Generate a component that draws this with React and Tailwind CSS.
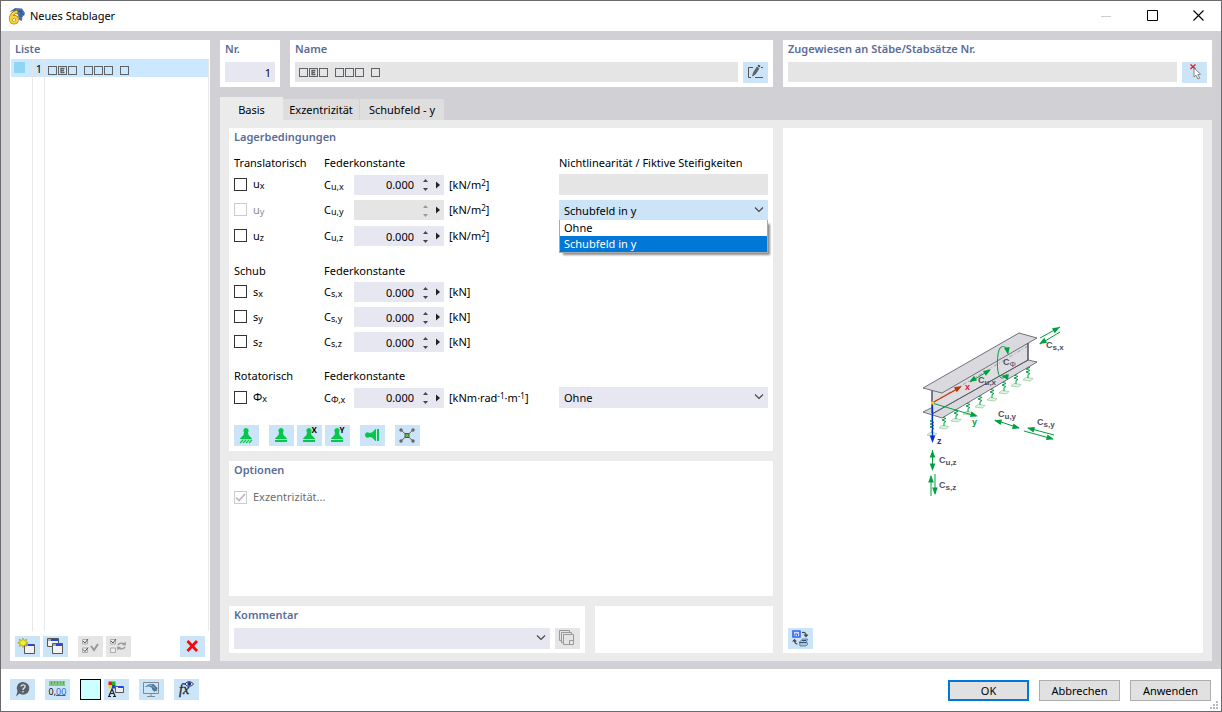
import React from 'react';

const panelTitle = 'font-semibold text-[11px] leading-[18px] text-[#5b6c96]';

function IconButton({ label, disabled, children, className = '' }) {
  return (
    <button
      type="button"
      aria-label={label}
      disabled={disabled}
      className={`h-[21px] w-[25px] shrink-0 ${disabled ? 'bg-[#e5e5e5]' : 'bg-[#cce4f7]'} ${className}`}
    >
      <svg viewBox="0 0 25 21" className="block h-[21px] w-[25px]" aria-hidden="true">
        {children}
      </svg>
    </button>
  );
}

function NameGlyphs() {
  return (
    <svg viewBox="0 0 82 10" className="block h-[10px] w-[82px]" fill="none" stroke="#5f6368" aria-hidden="true">
      {[0, 10, 20, 36, 46, 56, 72].map((x) => (
        <rect key={x} x={x + 0.5} y="0.5" width="8" height="8" />
      ))}
      <path d="M16.500 2.500H13v4h3.500M13 4.500h3" strokeWidth="1.300" />
    </svg>
  );
}

function AppIcon() {
  return (
    <svg viewBox="0 0 18 18" className="h-[18px] w-[18px]" aria-hidden="true">
      <path d="M1.500 5 7 1l7 .5 3 4.500-1 3-1.500-1-.5 6-3-1-1-5-4-4z" fill="#4d74aa" />
      <path d="m6 3 8 2M5 5l9-1M12 6l4 2M11 9h4" stroke="#2f4f80" />
      <path d="M9.500 4.500C5 5.500 2.800 8.500 2.800 12c0 2.500 1.200 3.700 3.200 3.700S9 14.300 9 12.500 7.900 9.800 6.200 9.800 3.400 11 3.400 12.200" fill="none" stroke="#a57a10" strokeWidth="3.400" />
      <path d="M9.500 4.500C5 5.500 2.800 8.500 2.800 12c0 2.500 1.200 3.700 3.200 3.700S9 14.300 9 12.500 7.900 9.800 6.200 9.800 3.400 11 3.400 12.200" fill="none" stroke="#f8d530" strokeWidth="2.200" />
    </svg>
  );
}

function TitleBar() {
  return (
    <header className="flex h-[30px] items-center justify-between bg-white">
      <div className="flex items-center gap-1 pl-[7px]">
        <AppIcon />
        <h1 className="text-[11px] text-black">Neues Stablager</h1>
      </div>
      <div className="flex">
        <button type="button" aria-label="Minimieren" disabled className="flex h-[30px] w-[46px] items-center justify-center">
          <svg viewBox="0 0 10 11" className="h-[11px] w-[10px]"><path d="M0 5.500h10" stroke="#ccc" /></svg>
        </button>
        <button type="button" aria-label="Maximieren" className="flex h-[29px] w-[46px] items-center justify-center">
          <svg viewBox="0 0 11 11" className="h-[11px] w-[11px]"><path d="M.5.5h10v10H.5z" fill="none" stroke="#000" /></svg>
        </button>
        <button type="button" aria-label="Schließen" className="flex h-[29px] w-[46px] items-center justify-center">
          <svg viewBox="0 0 11 11" className="h-[11px] w-[11px]"><path d="m.5.5 10 10m0-10-10 10" stroke="#000" strokeWidth="1.100" /></svg>
        </button>
      </div>
    </header>
  );
}

function ListPanel() {
  return (
    <aside className="flex w-[200px] shrink-0 flex-col bg-white">
      <h2 className={`${panelTitle} px-[5px] pb-px`}>Liste</h2>
      <div className="mx-px flex flex-1 flex-col">
        <button type="button" className="flex h-[18px] bg-[#cce8ff] text-left">
          <span className="h-full w-[22px] border-r border-[#e5e5e5] pl-[3px] pt-[3px]">
            <span className="block h-[11px] w-[11px] bg-[#8fd5f4]" />
          </span>
          <span className="h-full w-3 border-r border-[#e5e5e5] pr-[2px] text-right leading-5">1</span>
          <span aria-label="Name" className="h-full flex-1 border-r border-[#e5e5e5] pl-[3px] pt-[7px]">
            <NameGlyphs />
          </span>
        </button>
        <div className="flex flex-1">
          <div className="w-[22px] border-r border-[#e8e8e8]" />
          <div className="w-3 border-r border-[#e8e8e8]" />
          <div className="flex-1 border-r border-[#e8e8e8]" />
        </div>
      </div>
      <div className="flex px-[5px] pb-1 pt-[5px]">
        <IconButton label="Neu">
          <path d="M9.500 8.500h10v9h-10z" fill="#f2f2f2" stroke="#555" />
          <path d="M9 8h4v2H9z" fill="#999" />
          <path d="M13 8h6v2h-6z" fill="#2645e0" />
          <path d="m8 2 1 2.500 2.800-1.200-1.200 2.500 2.600 1-2.600 1 1.200 2.500L9 9l-1 2.500L7 9l-2.800 1.300 1.200-2.500-2.600-1 2.600-1-1.200-2.500L7 4.500z" fill="#f5ee20" stroke="#8d8a28" strokeWidth=".6" />
        </IconButton>
        <IconButton label="Kopieren" className="ml-[3px]">
          <path d="M4.500 2.500h11v8h-11z" fill="#f2f2f2" stroke="#555" />
          <path d="M5 3h3v2H5z" fill="#aaa" />
          <path d="M8 3h7v2H8z" fill="#2645e0" />
          <path d="M9.500 7.500h10v10h-10z" fill="#f2f2f2" stroke="#555" />
          <path d="M10 8h3v2h-3z" fill="#aaa" />
          <path d="M13 8h6v2h-6z" fill="#2645e0" />
        </IconButton>
        <IconButton label="Alle auswählen" disabled className="ml-[10px]">
          <path d="M4.500 3.500h5v4.500h-5zM4.500 12h5v4.500h-5z" fill="#eee" stroke="#aaa" />
          <path d="m5 5 2 2 3-4M5 13.500l2 2 3-4" fill="none" stroke="#555" />
          <path d="m13 10 3 4 4-6" fill="none" stroke="#999" strokeWidth="2" />
        </IconButton>
        <IconButton label="Auswahl umkehren" disabled className="ml-[3px]">
          <path d="M4.500 3.500h5v4.500h-5zM4.500 12h5v4.500h-5z" fill="#eee" stroke="#aaa" />
          <path d="m5 5 2 2 3-4" fill="none" stroke="#555" />
          <path d="M12 9c2-3 4-2 6-1M19 11c-2 3-4 2-6 1" fill="none" stroke="#999" strokeWidth="1.500" />
          <path d="m19.500 5.500.5 4-4-.5zM11.500 14.500l-.5-4 4 .5z" fill="#999" />
        </IconButton>
        <IconButton label="Löschen" className="ml-auto">
          <path d="m7.500 5 9.500 10m0-10-9.500 10" stroke="#f80808" strokeWidth="2.800" />
        </IconButton>
      </div>
    </aside>
  );
}

function TopRow() {
  return (
    <div className="flex gap-[10px]">
      <div className="flex w-[553px] shrink-0 gap-[10px]">
        <section className="w-[60px] bg-white px-[5px] pb-[5px]">
          <label htmlFor="nr" className={`${panelTitle} mb-1 block`}>Nr.</label>
          <input id="nr" defaultValue="1" className="block h-5 w-full bg-[#e7e7f2] pr-1 pt-px text-right" />
        </section>
        <section className="flex-1 bg-white px-[5px] pb-1">
          <label htmlFor="name" className={`${panelTitle} mb-1 block`}>Name</label>
          <div className="flex gap-[5px]">
            <div className="relative h-5 flex-1">
              <input id="name" readOnly className="block h-5 w-full bg-[#e5e5e5]" />
              <span className="pointer-events-none absolute left-1 top-[6px]"><NameGlyphs /></span>
            </div>
            <IconButton label="Name bearbeiten">
              <path d="M10 5.500H5.500v10H8M12 15.500h8M18 5.500h2" fill="none" stroke="#555" />
              <path d="m9.500 14 1-3.500L14 5l2 1.500-3.500 5.500z" fill="#666" stroke="#444" strokeWidth=".6" />
              <path d="m14.500 4 1-1.300 2 1.300-1 1.300z" fill="#333" />
            </IconButton>
          </div>
        </section>
      </div>
      <section className="flex-1 bg-white px-[5px] pb-1">
        <label htmlFor="assigned" className={`${panelTitle} mb-1 block`}>Zugewiesen an Stäbe/Stabsätze Nr.</label>
        <div className="flex gap-[5px]">
          <input id="assigned" readOnly className="block h-5 min-w-0 flex-1 bg-[#e5e5e5]" />
          <IconButton label="Auswählen">
            <path d="m8.500 2.500 5 4.500m0-4.500-5 4.500" stroke="#e02020" strokeWidth="1.400" />
            <path d="M12 6v9l2-1.800 2 3.800 1.700-.8-1.900-3.700 2.700-.3z" fill="#fff" stroke="#777" strokeWidth=".9" />
          </IconButton>
        </div>
      </section>
    </div>
  );
}

function Tabs() {
  return (
    <div role="tablist" className="flex items-end text-black">
      <button type="button" role="tab" aria-selected="true" className="h-[23px] w-[63px] bg-[#ebebeb] pt-[3px]">Basis</button>
      <button type="button" role="tab" aria-selected="false" className="h-[21px] w-[76px] bg-[#dedede]">Exzentrizität</button>
      <button type="button" role="tab" aria-selected="false" className="h-[21px] w-[85px] border-l border-[#d1d1d1] bg-[#dedede]">Schubfeld - y</button>
    </div>
  );
}

function CheckBox({ id, disabled, checked }) {
  return (
    <span className="relative block h-[13px] w-[13px] shrink-0">
      <input
        id={id}
        type="checkbox"
        disabled={disabled}
        defaultChecked={checked}
        className="block h-[13px] w-[13px] appearance-none border border-[#333] bg-white disabled:border-[#ccc]"
      />
      {checked && (
        <svg viewBox="0 0 13 13" className="pointer-events-none absolute inset-0 h-[13px] w-[13px]" aria-hidden="true">
          <path d="m2 6.500 3 3 6-6.500" fill="none" stroke="#b8b8b8" strokeWidth="1.600" />
        </svg>
      )}
    </span>
  );
}

function Sub({ children }) {
  return <sub className="bottom-[-1px] text-[9px]">{children}</sub>;
}

function Spinner({ id, disabled }) {
  return (
    <div className={`flex h-5 items-center ${disabled ? 'bg-[#e5e5e5]' : 'bg-[#e7e7f2]'}`}>
      <input id={id} defaultValue={disabled ? '' : '0.000'} disabled={disabled} className="h-5 w-[60px] bg-transparent text-right" />
      <span className={`ml-2 flex w-[7px] flex-col pb-px ${disabled ? 'text-[#999]' : 'text-[#444]'}`}>
        <button type="button" aria-label="Erhöhen" disabled={disabled} className="flex h-[7px] items-center justify-center">
          <svg viewBox="0 0 5 3" className="h-[3px] w-[5px]"><path d="M0 3 2.500 0 5 3z" fill="currentColor" /></svg>
        </button>
        <button type="button" aria-label="Verringern" disabled={disabled} className="flex h-[7px] items-end justify-center">
          <svg viewBox="0 0 5 3" className="h-[3px] w-[5px]"><path d="M0 0 2.500 3 5 0z" fill="currentColor" /></svg>
        </button>
      </span>
      <button type="button" aria-label="Mehr" className="ml-[7px] flex h-5 items-center">
        <svg viewBox="0 0 4 8" className="h-2 w-1"><path d="M0 .5 4 4 0 7.500z" fill="#222" /></svg>
      </button>
    </div>
  );
}

function Chevron() {
  return (
    <svg viewBox="0 0 10 6" className="pointer-events-none absolute right-1 top-[7px] h-[6px] w-[10px]" aria-hidden="true">
      <path d="m1 .5 4 4 4-4" fill="none" stroke="#444" strokeWidth="1.100" />
    </svg>
  );
}

const columns = 'grid grid-cols-[90px_30px_90px_115px_209px] items-center';

function SpringRow({ id, base, axis, sup, unit, disabled, children }) {
  return (
    <div className={`${columns} h-5`}>
      <div className="flex h-5 items-center gap-[6px] pb-px">
        <CheckBox id={`chk-${id}`} disabled={disabled} />
        <label htmlFor={`chk-${id}`} className={disabled ? 'text-[#8c8c8c]' : ''}>{base}<Sub>{axis}</Sub></label>
      </div>
      <label htmlFor={`val-${id}`} className="h-5 leading-5">C<Sub>{sup},{axis}</Sub></label>
      <Spinner id={`val-${id}`} disabled={disabled} />
      <span className="h-5 whitespace-nowrap pl-[5px] leading-5">{unit}</span>
      {children}
    </div>
  );
}

function GroupHead({ title, extra }) {
  return (
    <div className={`${columns} h-[21px] pb-[2px]`}>
      <h3>{title}</h3>
      <span className="col-span-3">Federkonstante</span>
      {extra && <span className="whitespace-nowrap">{extra}</span>}
    </div>
  );
}

function Sup({ children }) {
  return <sup className="top-[-3px] text-[8px]">{children}</sup>;
}

const perArea = <>[kN/m<Sup>2</Sup>]</>;

function SupportShape() {
  return <path d="M12 3a2.600 2.600 0 0 1 2 4.300l.5 2.700 3.500 3.500v.5H6v-.5L9.500 10l.5-2.700A2.600 2.600 0 0 1 12 3z" fill="#05c84b" />;
}

function ConditionsPanel() {
  return (
    <section className="bg-white px-[5px] pb-[5px] text-black">
      <h2 className={`${panelTitle} mb-[7px]`}>Lagerbedingungen</h2>
      <GroupHead title="Translatorisch" extra="Nichtlinearität / Fiktive Steifigkeiten" />
      <div className="flex flex-col gap-[6px]">
        <SpringRow id="ux" base="u" axis="x" sup="u" unit={perArea}>
          <select aria-label="Nichtlinearität x" disabled className="h-[21px] w-full appearance-none bg-[#e5e5e5] opacity-100" />
        </SpringRow>
        <SpringRow id="uy" base="u" axis="y" sup="u" unit={perArea} disabled>
          <div className="relative">
            <select aria-label="Nichtlinearität y" defaultValue="Schubfeld in y" className="block h-5 w-full appearance-none bg-[#cce4f7] pl-[5px] pt-[2px]">
              <option>Ohne</option>
              <option>Schubfeld in y</option>
            </select>
            <Chevron />
            <div role="listbox" aria-label="Nichtlinearität y Auswahl" className="absolute left-0 right-0 top-5 z-10 flex flex-col border border-t-0 border-[#aaa] bg-white shadow-[3px_3px_2px_-1px_rgba(0,0,0,0.45)]">
              <button type="button" role="option" aria-selected="false" className="h-4 pl-1 text-left leading-4">Ohne</button>
              <button type="button" role="option" aria-selected="true" className="h-4 bg-[#0078d7] pl-1 text-left leading-4 text-white">Schubfeld in y</button>
            </div>
          </div>
        </SpringRow>
        <SpringRow id="uz" base="u" axis="z" sup="u" unit={perArea} />
      </div>
      <div className="mt-[15px]"><GroupHead title="Schub" /></div>
      <div className="flex flex-col gap-[5px]">
        <SpringRow id="sx" base="s" axis="x" sup="s" unit="[kN]" />
        <SpringRow id="sy" base="s" axis="y" sup="s" unit="[kN]" />
        <SpringRow id="sz" base="s" axis="z" sup="s" unit="[kN]" />
      </div>
      <div className="mt-[14px]"><GroupHead title="Rotatorisch" /></div>
      <SpringRow id="phix" base="Φ" axis="x" sup="Φ" unit={<>[kNm·rad<Sup>-1</Sup>·m<Sup>-1</Sup>]</>}>
        <div className="relative">
          <select aria-label="Nichtlinearität Rotation" defaultValue="Ohne" className="block h-[21px] w-full appearance-none bg-[#e7e7f2] pl-[5px] pt-px">
            <option>Ohne</option>
          </select>
          <Chevron />
        </div>
      </SpringRow>
      <div className="mt-[18px] flex">
        <IconButton label="Eingespannt">
          <SupportShape />
          <path d="m6 18 3-3m0 3 3-3m0 3 3-3m0 3 3-3" stroke="#05c84b" strokeWidth="1.200" />
        </IconButton>
        <IconButton label="Gelenkig" className="ml-[10px]">
          <SupportShape />
          <path d="M6 15h12v2H6z" fill="#05c84b" />
        </IconButton>
        <IconButton label="Gelenkig X" className="ml-[3px]">
          <SupportShape />
          <path d="M6 15h12v2H6z" fill="#05c84b" />
          <text x="14.500" y="8" fontSize="8" fontWeight="700" fontFamily="Open Sans">X</text>
        </IconButton>
        <IconButton label="Gelenkig Y" className="ml-[3px]">
          <SupportShape />
          <path d="M6 15h12v2H6z" fill="#05c84b" />
          <text x="14.500" y="8" fontSize="8" fontWeight="700" fontFamily="Open Sans">Y</text>
        </IconButton>
        <IconButton label="Seitlich" className="ml-[10px]">
          <path d="M5 10a2.600 2.600 0 0 1 4.300-2l2.700-.5L15.500 4h.5v12h-.5L12 12.500 9.300 12A2.600 2.600 0 0 1 5 10zM17 4h2v12h-2z" fill="#05c84b" />
        </IconButton>
        <IconButton label="Frei" className="ml-[10px]">
          <path d="m6 5 12 11M18 5 6 16" stroke="#666" />
          <g fill="#666"><circle cx="6" cy="5" r="1.700" /><circle cx="18" cy="5" r="1.700" /><circle cx="6" cy="16" r="1.700" /><circle cx="18" cy="16" r="1.700" /></g>
          <path d="M10 8.500h4v4h-4z" fill="#6db33f" stroke="#555" />
        </IconButton>
      </div>
    </section>
  );
}

function Head({ x, y, angle, fill = '#00a040' }) {
  return <path d="M1 0-6.500-2.800v5.600z" fill={fill} transform={`translate(${x} ${y}) rotate(${angle})`} />;
}

const springs = [[22, 105], [34, 98], [46, 91], [58, 84], [70, 77], [82, 70], [94, 63], [106, 56], [118, 50]];

function BeamDrawing() {
  return (
    <svg viewBox="-2 0 170 200" className="h-[200px] w-[170px]" role="img" aria-label="Stablager am Träger">
      <g fill="none" stroke="#00a040">
        {springs.map(([x, y]) => (
          <g key={x}>
            <path d={`m${x - 5} ${y + 20} 3-2.500 7 1-2.500 2.500z`} fill="#e3f3e6" stroke="#8fc99a" strokeWidth=".7" />
            <path d={`M${x} ${y}v5l-2 1 4 1.500-4 1.500 4 1.500-4 1.500 4 1.500-2 1v3.500`} />
          </g>
        ))}
      </g>
      <g stroke="#505064" strokeWidth=".8" strokeLinejoin="round">
        <path d="m13 102 19 6 95-56-9-2z" fill="#d9d9dd" />
        <path d="m22 80 96-47v17L22 104z" fill="#dedee2" />
        <path d="m13 78 19 5 95-55-18-5z" fill="#d9d9de" />
        <path d="M22 81v22M118 33v17" strokeWidth="1.200" />
        <path d="M22 104 118 50" />
      </g>
      <path d="m22 93 96-57" stroke="#777" strokeWidth=".6" strokeDasharray="4 2 1 2" />
      <g stroke="#00a040" fill="none">
        <path d="m60 72 20-12M85 110l24 8M22 93l44 13M22.500 140v20M130 28l20-11M150 22l-20 12M144 125l-26-7M114 121l29 8M21 186v-20M25 164v20" />
        <path d="M98 41c-1-4-5-6-8-3-3 4-4 24 0 29 2 2 5 1 7-3" />
      </g>
      <Head x={60} y={71.5} angle={149} /><Head x={80} y={60} angle={-31} />
      <Head x={85} y={110.500} angle={195} /><Head x={109} y={118} angle={16} />
      <Head x={67} y={106} angle={16} /><Head x={149} y={17.500} angle={-30} />
      <Head x={130} y={33.500} angle={150} /><Head x={118} y={118} angle={195} />
      <Head x={143} y={129} angle={16} /><Head x={22.500} y={141} angle={-90} />
      <Head x={22.500} y={160} angle={90} /><Head x={21} y={166} angle={-90} />
      <Head x={25} y={184} angle={90} /><Head x={98} y={44} angle={80} /><Head x={92} y={66} angle={190} />
      <path d="m22 93 27-15" stroke="#c83200" strokeWidth="1.200" />
      <Head x={51} y={76.5} angle={-30} fill="#c83200" />
      <path d="M22.500 94v33" stroke="#0032c8" strokeWidth="1.300" />
      <Head x={22.500} y={132} angle={90} fill="#0032c8" />
      <circle cx="22.500" cy="93" r="1.800" fill="#ffc800" />
      <g fontFamily="Liberation Sans" fontWeight="700" fontSize="9" fill="#505064">
        <text x="136" y="38">C<tspan fontSize="8" dy="2">s,x</tspan></text>
        <text x="93" y="55">C<tspan fontSize="8" dy="2" fontWeight="400">Φ</tspan></text>
        <text x="68" y="73">C<tspan fontSize="8" dy="2">u,x</tspan></text>
        <text x="88" y="107">C<tspan fontSize="8" dy="2">u,y</tspan></text>
        <text x="127" y="115">C<tspan fontSize="8" dy="2">s,y</tspan></text>
        <text x="29" y="153">C<tspan fontSize="8" dy="2">u,z</tspan></text>
        <text x="29" y="178">C<tspan fontSize="8" dy="2">s,z</tspan></text>
        <text x="55" y="80" fill="#f01428">x</text>
        <text x="62" y="115" fill="#00a040">y</text>
        <text x="27" y="134" fill="#3228a0">z</text>
      </g>
    </svg>
  );
}

function PreviewPanel() {
  return (
    <section className="flex flex-1 flex-col bg-white px-[5px] pb-1">
      <div className="flex flex-1 items-center justify-center pt-16"><BeamDrawing /></div>
      <IconButton label="Ansicht wechseln">
        <path d="M5 3h7v6H5z" fill="#cfdcff" stroke="#3264f0" strokeWidth="1.600" />
        <path d="M7 8V6h2.500v2" fill="none" stroke="#3264f0" />
        <path d="M14 4.500c3-.5 4 .5 4 3M6.500 11.500c0 3 1 4.500 3 4.500" fill="none" stroke="#444" strokeWidth="1.200" />
        <path d="m15.500 6.500 2.500 3 2.500-3zM4 13.500 6.500 11 9 13.500z" fill="#444" />
        <path d="m11.500 14 3-3h5l-1 3 1.500 2-2 2h-6z" fill="#a9c3d8" stroke="#4a6e90" strokeWidth=".8" />
        <path d="M11.500 14.500h7M14 12.500h4" fill="none" stroke="#31506e" />
      </IconButton>
    </section>
  );
}

function Footer() {
  const action = 'h-[21px] w-[81px] bg-[#e1e1e1] text-black';
  return (
    <footer className="flex h-[42px] items-center bg-white pb-px pl-[9px] pr-[10px]">
      <IconButton label="Hilfe">
        <path d="M13 3a6.300 6.300 0 1 1-3.500 11.500L6 17.500l1.500-5A6.300 6.300 0 0 1 13 3z" fill="#5b6066" />
        <path d="M11 7.500c.3-2.300 4.200-2.200 4 .2-.1 1.500-2 1.400-2 3.200M13 12v1.500" fill="none" stroke="#cce4f7" strokeWidth="1.400" />
      </IconButton>
      <IconButton label="Einheiten" className="ml-[10px]">
        <path d="M4 2h16v5H4z" fill="#84c87c" />
        <path d="M6.500 2.500v3M9.500 2.500v2M12.500 2.500v3M15.500 2.500v2M18.500 2.500v3" stroke="#5aa052" />
        <text x="3.500" y="15.500" fontSize="9" fontFamily="Open Sans">0,</text>
        <text x="11" y="15.500" fontSize="9" fontFamily="Open Sans" fill="#2860c8">00</text>
        <path d="M11 16.500h9.500" stroke="#2860c8" />
      </IconButton>
      <button type="button" aria-label="Farbe" className="ml-[10px] h-[21px] w-[21px] border border-black bg-[#ccffff]" />
      <IconButton label="Darstellung" className="ml-[3px]">
        <path d="M4.500 2.500H8V6H4.500z" fill="#e81818" /><path d="M8 2.500h3.500V6H8z" fill="#18b820" />
        <path d="M4.500 6H8v3.500H4.500z" fill="#f5e010" /><path d="M8 6h3.500v3.500H8z" fill="#2040e8" />
        <path d="M11.500 7.500h8v6h-8z" fill="#eee" stroke="#555" /><path d="M14 7h5v2h-5z" fill="#2645e0" />
        <path d="m5 17 3-7 3 7M6 14.500h4M4 17.500h3m2 0h3" fill="none" stroke="#222" strokeWidth="1.200" />
      </IconButton>
      <IconButton label="Ansicht" className="ml-[10px]">
        <path d="M4.500 3.500h15v11h-15zM12 14.500V17M8 17.500h8" fill="none" stroke="#808890" />
        <path d="m5.500 8 4-2.500 5-.5 4 4-1 3.500-2-1 .5 2-2.500-2.500-1-2.500-3-1z" fill="#46789f" />
        <path d="m8 7.500 5-1 3 3" fill="none" stroke="#94b6ce" />
      </IconButton>
      <IconButton label="Formel" className="ml-[10px]">
        <text x="5" y="15" fontSize="14" fontStyle="italic" fontFamily="Liberation Serif" fill="#222" stroke="#222" strokeWidth=".3">fx</text>
        <path d="M11 5C13 2 17 2 19.500 5 17 8 13 8 11 5z" fill="#dce6ff" stroke="#222850" />
        <circle cx="15.300" cy="4.800" r="1.900" fill="#28307c" />
      </IconButton>
      <div className="ml-auto flex gap-[10px] self-end pb-[9px]">
        <button type="button" className={`${action} border-2 border-[#0078d7]`}>OK</button>
        <button type="button" className={`${action} border border-[#adadad]`}>Abbrechen</button>
        <button type="button" className={`${action} border border-[#adadad]`}>Anwenden</button>
      </div>
      <svg viewBox="0 0 8 8" className="pointer-events-none absolute bottom-[2px] right-[3px] h-2 w-2" fill="#bbb" aria-hidden="true">
        <path d="M6 0h2v2H6zM3 3h2v2H3zM6 3h2v2H6zM0 6h2v2H0zM3 6h2v2H3zM6 6h2v2H6z" />
      </svg>
    </footer>
  );
}

export default function App() {
  return (
    <div className="relative flex min-h-screen flex-col border border-[#6a6a6c] bg-white font-['Noto_Sans','Open_Sans',sans-serif] text-[11px] leading-4 text-black">
      <TitleBar />
      <main className="flex flex-1 gap-[10px] bg-[#d1d0d5] px-[9px] pb-2 pt-[9px]">
        <ListPanel />
        <div className="flex min-w-0 flex-1 flex-col">
          <TopRow />
          <div className="mt-[10px]"><Tabs /></div>
          <div className="flex flex-1 gap-[10px] bg-[#ebebeb] px-[9px] pb-2 pt-2">
            <div className="flex w-[544px] shrink-0 flex-col gap-[10px]">
              <ConditionsPanel />
              <section className="flex-1 bg-white px-[5px]">
                <h2 className={panelTitle}>Optionen</h2>
                <div className="mt-[10px] flex items-center gap-[6px]">
                  <CheckBox id="ecc" disabled checked />
                  <label htmlFor="ecc" className="text-[#6d6d6d]">Exzentrizität...</label>
                </div>
              </section>
              <div className="flex gap-[10px]">
                <section className="w-[356px] bg-white px-[5px] pb-1">
                  <label htmlFor="comment" className={`${panelTitle} mb-1 block`}>Kommentar</label>
                  <div className="flex gap-[5px]">
                    <div className="relative flex-1">
                      <select id="comment" className="block h-[21px] w-full appearance-none bg-[#e7e7f2]" />
                      <Chevron />
                    </div>
                    <IconButton label="Kommentare" disabled>
                      <path d="M4.500 2.500h10v10h-10z" fill="#e5e5e5" stroke="#999" />
                      <path d="M6.500 4.500h10v10h-10z" fill="#e5e5e5" stroke="#999" />
                      <path d="M8.500 6.500h10v10h-10zM14.500 16.500v-4h4" fill="#e5e5e5" stroke="#999" />
                    </IconButton>
                  </div>
                </section>
                <section className="flex-1 bg-white" />
              </div>
            </div>
            <PreviewPanel />
          </div>
        </div>
      </main>
      <Footer />
    </div>
  );
}
